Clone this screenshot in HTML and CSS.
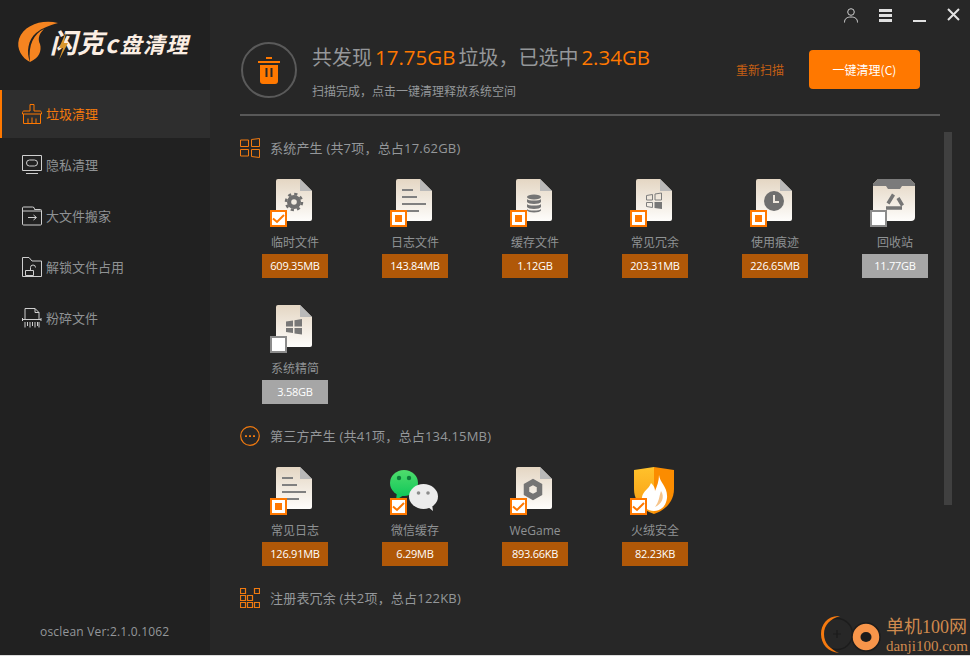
FILE: index.html
```html
<!DOCTYPE html>
<html lang="zh-CN">
<head>
<meta charset="utf-8">
<title>闪克C盘清理</title>
<link rel="stylesheet" href="styles.css">
</head>
<body>
<svg class="defs" width="0" height="0" aria-hidden="true">
  <defs>
    <linearGradient id="paper" x1="0" y1="0" x2="0" y2="1">
      <stop offset="0" stop-color="#e4d6c3"/>
      <stop offset="1" stop-color="#fefdfb"/>
    </linearGradient>
    <linearGradient id="shieldL" x1="0" y1="0" x2="0" y2="1">
      <stop offset="0" stop-color="#ffc22c"/>
      <stop offset="1" stop-color="#f89a10"/>
    </linearGradient>
    <linearGradient id="green" x1="0" y1="0" x2="0" y2="1">
      <stop offset="0" stop-color="#4fdc6c"/>
      <stop offset="1" stop-color="#12c85a"/>
    </linearGradient>
    <symbol id="doc" viewBox="0 0 50 48">
      <path d="M8 0H30L42 12V40a2 2 0 0 1-2 2H8a2 2 0 0 1-2-2V2a2 2 0 0 1 2-2Z" fill="url(#paper)"/>
      <path d="M30 0L42 12H30Z" fill="#b9b9b9"/>
    </symbol>
  </defs>
</svg>
<div class="app">
  <aside class="side">
    <div class="logo">
      <svg class="logo-art" width="80" height="70" viewBox="0 0 80 70" aria-hidden="true">
        <path d="M58 23C42 19 24 25 19 39C16 49 22 58 30 62C26 52 28 40 36 33C42 28 50 25 58 23Z" fill="#f58420"/>
        <path d="M30 62C39 58 42 51 40 44C38 40 38 35 44 29C34 34 28 44 30 62Z" fill="#f58420"/>
        <path d="M66 32L59 48H63L59 60L68 43H64Z" fill="#d9962c"/>
      </svg>
      <span class="logo-big">闪克</span><span class="logo-c">c</span><span class="logo-small">盘清理</span>
    </div>
    <nav class="menu">
      <a class="menu-item active">
        <svg width="20" height="20" viewBox="0 0 20 20" fill="none" stroke="currentColor"><path d="M8 .5h4V7h6c1 0 1.500.8 1.500 1.800V10H.5V8.800C.5 7.800 1 7 2 7h6ZM1.500 10V19.500H18.500V10M6 19V14.500M10 19V13.500M14 19V14.500"/></svg>
        <span>垃圾清理</span>
      </a>
      <a class="menu-item">
        <svg width="20" height="20" viewBox="0 0 20 20" fill="none" stroke="currentColor"><path d="M.5 .5h19v15H.5Z"/><rect x="4.500" y="5" width="11" height="6" rx="3"/><path d="M4 18.500h12"/></svg>
        <span>隐私清理</span>
      </a>
      <a class="menu-item">
        <svg width="20" height="20" viewBox="0 0 20 20" fill="none" stroke="currentColor"><path d="M.5 5V2a1 1 0 0 1 1-1h9a2 2 0 0 1 2 2v.5h6a1 1 0 0 1 1 1V18a1 1 0 0 1-1 1H1.500a1 1 0 0 1-1-1V5H19"/><path d="M6 11.500h8M11.500 9l3 2.500-3 2.500"/></svg>
        <span>大文件搬家</span>
      </a>
      <a class="menu-item">
        <svg width="20" height="20" viewBox="0 0 20 20" fill="none" stroke="currentColor"><path d="M.5 .5H7L10 4H19.500V19.500H.5Z"/><path d="M3.500 13.500H11.500V18.500H3.500ZM8.500 13.500V10.500a2.500 2.500 0 0 1 5 0"/></svg>
        <span>解锁文件占用</span>
      </a>
      <a class="menu-item">
        <svg width="20" height="20" viewBox="0 0 20 20" fill="none" stroke="currentColor"><path d="M3 11V.5H13L17 4.500V11M13 .5V4.500H17M.5 11.500H19M.5 10v3M19 10v3M3 14V19.500M5.500 14V18M8 14V19.500M10.500 14V18M13 14V19.500M15.500 14V18M17 14V19.500"/></svg>
        <span>粉碎文件</span>
      </a>
    </nav>
    <div class="version">osclean Ver:2.1.0.1062</div>
  </aside>

  <main class="main">
    <div class="winbar">
      <svg width="14" height="15" viewBox="0 0 14 15" fill="none" stroke="#cfcfcf"><circle cx="7" cy="4" r="3.300"/><path d="M.5 14.500C.5 10.500 3 9 7 9s6.500 1.500 6.500 5.500"/></svg>
      <span class="burger"></span>
      <span class="minimize"></span>
      <svg width="13" height="13" viewBox="0 0 13 13" stroke="#e2e2e2" stroke-width="2"><path d="M1 1L12 12M12 1L1 12"/></svg>
    </div>

    <header class="head">
      <div class="ring">
        <svg width="24" height="28" viewBox="0 0 24 28" aria-hidden="true">
          <path d="M9 1h6v2h-6ZM1 5h22v2H1Z" fill="#ff7800"/>
          <path d="M3 9H21V25a3 3 0 0 1-3 3H6a3 3 0 0 1-3-3Z" fill="#ff7800"/>
          <path d="M8.500 12h2v9h-2ZM13.500 12h2v9h-2Z" fill="#272727"/>
        </svg>
      </div>
      <div class="head-text">
        <div class="title">共发现 <b>17.75GB</b> 垃圾，已选中 <b>2.34GB</b></div>
        <div class="subtitle">扫描完成，点击一键清理释放系统空间</div>
      </div>
      <a class="rescan">重新扫描</a>
      <button class="clean">一键清理(C)</button>
    </header>

    <section class="group">
      <h2 class="group-head">
        <svg width="20" height="20" viewBox="0 0 20 20" fill="none" stroke="#f07a10"><path d="M.5 2H8.500V8.500H.5ZM11.500 1.500L19.500 .5V8.500H11.500ZM.5 11.500H8.500V18H.5ZM11.500 11.500H19.500V19.500L11.500 18.500Z"/></svg>
        <span>系统产生 (共7项，总占17.62GB)</span>
      </h2>
      <div class="tiles">
        <div class="tile">
          <div class="art">
            <svg width="50" height="48" viewBox="0 0 50 48"><use href="#doc"/><circle cx="24" cy="23" r="7" fill="#6f6f6f"/><circle cx="24" cy="23" r="8" fill="none" stroke="#6f6f6f" stroke-width="2.500" stroke-dasharray="3.200 3.080"/><circle cx="24" cy="23" r="2.800" fill="#f1ebe2"/></svg>
            <i class="check on"><svg width="13" height="13" viewBox="0 0 13 13" fill="none" stroke="#ff7800" stroke-width="2"><path d="M1 6.500L5 10L12 3"/></svg></i>
          </div>
          <div class="name">临时文件</div>
          <div class="size">609.35MB</div>
        </div>
        <div class="tile">
          <div class="art">
            <svg width="50" height="48" viewBox="0 0 50 48"><use href="#doc"/><path d="M12 11h11M12 18h15M12 25h24M12 32h17" stroke="#808080" stroke-width="2"/></svg>
            <i class="check part"></i>
          </div>
          <div class="name">日志文件</div>
          <div class="size">143.84MB</div>
        </div>
        <div class="tile">
          <div class="art">
            <svg width="50" height="48" viewBox="0 0 50 48"><use href="#doc"/><g fill="#757575"><ellipse cx="24" cy="18" rx="7" ry="2.500"/><path d="M17 20c1 2 13 2 14 0v3c-1 2.500-13 2.500-14 0ZM17 25c1 2 13 2 14 0v3c-1 2.500-13 2.500-14 0ZM17 30c1 2 13 2 14 0v1.500c-1 2.500-13 2.500-14 0Z"/></g></svg>
            <i class="check part"></i>
          </div>
          <div class="name">缓存文件</div>
          <div class="size">1.12GB</div>
        </div>
        <div class="tile">
          <div class="art">
            <svg width="50" height="48" viewBox="0 0 50 48"><use href="#doc"/><path d="M16.500 16.500L22.500 15.500V21H16.500ZM25 15L31.500 14V21H25ZM16.500 23.500H22.500V28.500L16.500 27.500Z" fill="none" stroke="#7d7d7d"/><path d="M24.500 23H32V30L24.500 29Z" fill="#777"/></svg>
            <i class="check part"></i>
          </div>
          <div class="name">常见冗余</div>
          <div class="size">203.31MB</div>
        </div>
        <div class="tile">
          <div class="art">
            <svg width="50" height="48" viewBox="0 0 50 48"><use href="#doc"/><circle cx="24" cy="22" r="10" fill="#6f6f6f"/><path d="M24 16v7h5" fill="none" stroke="#efe8de" stroke-width="2"/></svg>
            <i class="check part"></i>
          </div>
          <div class="name">使用痕迹</div>
          <div class="size">226.65MB</div>
        </div>
        <div class="tile">
          <div class="art">
            <svg width="50" height="48" viewBox="0 0 50 48"><path d="M8 0H40L45 5V38a4 4 0 0 1-4 4H7a4 4 0 0 1-4-4V5Z" fill="url(#paper)"/><path d="M8 0H40L45 5V7H32L30 10H18L16 7H3V5Z" fill="#7b7b7b"/><path d="M23.500 15.500L18 24.500M28 19L32.500 26.500M16 29H32" fill="none" stroke="#767676" stroke-width="3.500"/></svg>
            <i class="check"></i>
          </div>
          <div class="name">回收站</div>
          <div class="size off">11.77GB</div>
        </div>
        <div class="tile">
          <div class="art">
            <svg width="50" height="48" viewBox="0 0 50 48"><use href="#doc"/><path d="M16 16.500L23 15.500V21.500H16ZM24.500 15.300L32 14V21.500H24.500ZM16 23H23V28L16 27ZM24.500 23H32V29.500L24.500 28.500Z" fill="#777"/></svg>
            <i class="check"></i>
          </div>
          <div class="name">系统精简</div>
          <div class="size off">3.58GB</div>
        </div>
      </div>
    </section>

    <section class="group">
      <h2 class="group-head">
        <svg width="20" height="20" viewBox="0 0 20 20"><circle cx="10" cy="10" r="9.300" fill="none" stroke="#f07a10" stroke-width="1.200"/><path d="M5 9.200h2v1.800H5ZM9 9.200h2v1.800H9ZM13 9.200h2v1.800h-2Z" fill="#f07a10"/></svg>
        <span>第三方产生 (共41项，总占134.15MB)</span>
      </h2>
      <div class="tiles">
        <div class="tile">
          <div class="art">
            <svg width="50" height="48" viewBox="0 0 50 48"><use href="#doc"/><path d="M12 11h11M12 18h15M12 25h24M12 32h17" stroke="#808080" stroke-width="2"/></svg>
            <i class="check part"></i>
          </div>
          <div class="name">常见日志</div>
          <div class="size">126.91MB</div>
        </div>
        <div class="tile">
          <div class="art">
            <svg width="50" height="48" viewBox="0 0 50 48"><ellipse cx="14" cy="16" rx="14" ry="13" fill="url(#green)"/><path d="M7 25l-1 8 8-5Z" fill="#14c95c"/><circle cx="9" cy="11" r="2.200" fill="#0e7d3a"/><circle cx="19" cy="11" r="2.200" fill="#0e7d3a"/><ellipse cx="33.500" cy="29.500" rx="14.500" ry="12.500" fill="#ececec"/><path d="M38 40l5 4-1-7Z" fill="#ececec"/><circle cx="28.500" cy="26" r="1.800" fill="#8c8c8c"/><circle cx="38" cy="26" r="1.800" fill="#8c8c8c"/></svg>
            <i class="check on"><svg width="13" height="13" viewBox="0 0 13 13" fill="none" stroke="#ff7800" stroke-width="2"><path d="M1 6.500L5 10L12 3"/></svg></i>
          </div>
          <div class="name">微信缓存</div>
          <div class="size">6.29MB</div>
        </div>
        <div class="tile">
          <div class="art">
            <svg width="50" height="48" viewBox="0 0 50 48"><use href="#doc"/><path d="M23 15L29.500 18.700V26.300L23 30L16.500 26.300V18.700Z" fill="none" stroke="#757575" stroke-width="5.500"/></svg>
            <i class="check on"><svg width="13" height="13" viewBox="0 0 13 13" fill="none" stroke="#ff7800" stroke-width="2"><path d="M1 6.500L5 10L12 3"/></svg></i>
          </div>
          <div class="name">WeGame</div>
          <div class="size">893.66KB</div>
        </div>
        <div class="tile">
          <div class="art art-tall">
            <svg width="50" height="48" viewBox="0 0 50 48"><path d="M4 3L24 0V47C12 43 4 34 4 22Z" fill="url(#shieldL)"/><path d="M24 0L44 3V22C44 34 36 43 24 47Z" fill="#fb8c00"/><path d="M29 8C30 16 38 20 37 31C36 40 30 44 24 44C16 44 11 38 12 30C13 24 19 22 21 16C24 19 25 21 25 24C27 19 29 14 29 8Z" fill="#fff"/><path d="M31 24C35 30 32 37 25 40C29 35 29 30 31 24Z" fill="#f6c48a"/></svg>
            <i class="check on"><svg width="13" height="13" viewBox="0 0 13 13" fill="none" stroke="#ff7800" stroke-width="2"><path d="M1 6.500L5 10L12 3"/></svg></i>
          </div>
          <div class="name">火绒安全</div>
          <div class="size">82.23KB</div>
        </div>
      </div>
    </section>

    <section class="group">
      <h2 class="group-head">
        <svg width="20" height="20" viewBox="0 0 20 20" fill="none" stroke="#f07a10" stroke-width="1.200"><path d="M.5 .5h5v5h-5ZM14.500 .5h5v5h-5ZM.5 7.500h5v5h-5ZM7.500 7.500h5v5h-5ZM.5 14.500h5v5h-5ZM7.500 14.500h5v5h-5ZM14.500 14.500h5v5h-5Z"/></svg>
        <span>注册表冗余 (共2项，总占122KB)</span>
      </h2>
    </section>

    <div class="scroll-thumb"></div>

    <div class="watermark">
      <svg class="wm-art" width="64" height="41" viewBox="0 0 64 41" aria-hidden="true">
        <circle cx="18" cy="20" r="15.500" fill="none" stroke="#1c1c1c" stroke-width="1.500"/>
        <path d="M21 2C9 1 2 10 2 20c0 10 7 18 18 19C11 35 5 29 5 20C5 11 11 5 21 2Z" fill="#f57a10"/>
        <path d="M14 20h8M18 16v8" stroke="#1c1c1c" stroke-width="1.200"/>
        <circle cx="47" cy="23" r="14" fill="#f7954a" stroke="#1c1c1c" stroke-width="1.500"/>
        <ellipse cx="47" cy="23" rx="5.500" ry="5" fill="#1c1c1c"/>
      </svg>
      <div class="wm-text">
        <div class="wm-cn">单机100网</div>
        <div class="wm-en">danji100.com</div>
      </div>
    </div>
  </main>
</div>
</body>
</html>
```

FILE: styles.css
```css
* { box-sizing: border-box; }
html, body { margin: 0; padding: 0; }
body {
  width: 970px;
  height: 656px;
  overflow: hidden;
  background: #dcdcdc;
  font-family: "Noto Sans CJK SC", "Noto Sans", sans-serif;
}
.defs { position: absolute; }
.app { display: flex; width: 970px; height: 655px; overflow: hidden; }

/* sidebar */
.side {
  width: 210px;
  background: #212121;
  display: flex;
  flex-direction: column;
  flex: none;
}
.logo {
  position: relative;
  height: 90px;
  padding: 26px 0 0 50px;
  display: flex;
  align-items: baseline;
  color: #fbeee3;
  font-weight: 700;
  font-style: italic;
  line-height: 32px;
}
.logo-art { position: absolute; left: 0; top: 0; }
.logo-big { font-size: 27px; letter-spacing: 0; }
.logo-c { font-size: 24px; margin: 0 2px 0 1px; }
.logo-small { font-size: 22px; letter-spacing: 1px; }
.menu { display: flex; flex-direction: column; gap: 3px; }
.menu-item {
  height: 48px;
  display: flex;
  align-items: center;
  gap: 4px;
  padding-left: 22px;
  font-size: 13px;
  color: #8f9294;
}
.menu-item span { padding-bottom: 2px; }
.menu-item svg { color: #cfcfcf; flex: none; }
.menu-item.active {
  background: #2e2e2e;
  box-shadow: inset 2px 0 0 #ff7800;
  color: #f57a0c;
}
.menu-item.active svg { color: #ff7800; }
.version {
  margin-top: auto;
  padding: 0 0 14px 40px;
  font-size: 12px;
  line-height: 18px;
  letter-spacing: .2px;
  color: #94979a;
  font-family: "Open Sans", "Noto Sans CJK SC", sans-serif;
}

/* main */
.main {
  position: relative;
  flex: 1;
  min-width: 0;
  background: #272727;
  padding-left: 30px;
  overflow: hidden;
}
.winbar {
  height: 30px;
  margin-right: 10px;
  padding-top: 8px;
  display: flex;
  align-items: flex-start;
  justify-content: flex-end;
  gap: 21px;
}
.burger {
  width: 13px;
  height: 13px;
  margin-top: 1px;
  border-top: 3px solid #e0e0e0;
  border-bottom: 3px solid #e0e0e0;
  position: relative;
}
.burger::before {
  content: "";
  position: absolute;
  left: 0;
  right: 0;
  top: 2px;
  height: 3px;
  background: #e0e0e0;
}
.minimize {
  width: 13px;
  height: 2px;
  margin-top: 12px;
  background: #e2e2e2;
}
.head {
  width: 700px;
  height: 74px;
  margin-top: 12px;
  border-bottom: 2px solid #585858;
  display: flex;
  align-items: flex-start;
}
.ring {
  width: 56px;
  height: 56px;
  margin-left: 1px;
  border: 2px solid #5a5a5a;
  border-radius: 50%;
  display: flex;
  align-items: center;
  justify-content: center;
  flex: none;
}
.head-text { margin-left: 15px; flex: none; }
.title {
  font-size: 20px;
  line-height: 30px;
  word-spacing: -1.500px;
  color: #95979a;
}
.title b { font-weight: 400; color: #ff7800; font-size: 20.5px; font-family: "Open Sans", sans-serif; }
.subtitle {
  margin-top: 9px;
  font-size: 12px;
  line-height: 20px;
  color: #94979a;
}
.rescan {
  margin-left: auto;
  margin-top: 19px;
  font-size: 12px;
  line-height: 18px;
  color: #c45f14;
}
.clean {
  width: 111px;
  height: 39px;
  margin: 8px 20px 0 25px;
  border: 0;
  border-radius: 4px;
  background: #ff7800;
  color: #fff;
  font: 400 12px "Noto Sans CJK SC", sans-serif;
}
.group { margin-top: 22px; }
.group-head {
  display: flex;
  align-items: center;
  gap: 10px;
  height: 20px;
  margin: 0 0 21px;
  font-size: 13px;
  font-weight: 400;
  letter-spacing: .2px;
  color: #94979a;
  font-family: "Open Sans", "Noto Sans CJK SC", sans-serif;
}
.group-head span { padding-bottom: 2px; }
.group-head svg { flex: none; }
.tiles {
  display: grid;
  grid-template-columns: repeat(6, 120px);
  grid-auto-rows: 99px;
  row-gap: 27px;
  margin-left: -5px;
}
.tile {
  display: flex;
  flex-direction: column;
  align-items: center;
}
.art { position: relative; width: 50px; height: 48px; flex: none; }
.art svg { display: block; }
.art-tall > svg { overflow: visible; }
.check {
  position: absolute;
  left: 0;
  top: 31px;
  width: 17px;
  height: 17px;
  background: #fff;
  border: 2px solid #8c8c8c;
  display: flex;
  align-items: center;
  justify-content: center;
}
.check.on, .check.part { border-color: #ff7800; }
.check.part::before { content: ""; width: 7px; height: 7px; background: #ff7800; }
.name {
  margin-top: 7px;
  font-size: 12px;
  line-height: 18px;
  color: #8f9294;
  white-space: nowrap;
  font-family: "Open Sans", "Noto Sans CJK SC", sans-serif;
}
.size {
  width: 66px;
  height: 24px;
  margin-top: 2px;
  background: #b05808;
  color: #fff;
  font-size: 11px;
  letter-spacing: -.25px;
  line-height: 24px;
  text-align: center;
  font-family: "Open Sans", sans-serif;
}
.size.off { background: #a6a6a6; }

/* overlays */
.scroll-thumb {
  position: absolute;
  left: 734px;
  top: 132px;
  width: 8px;
  height: 373px;
  background: #404040;
}
.watermark {
  position: absolute;
  right: 0;
  bottom: 0;
  display: flex;
  align-items: flex-end;
}
.wm-art { display: block; margin-right: 3px; }
.wm-text { color: #cf8a4e; padding-right: 2px; }
.wm-cn {
  font-size: 18px;
  line-height: 20px;
  font-family: "Liberation Serif", "Noto Sans CJK SC", serif;
}
.wm-en {
  font-size: 15px;
  line-height: 18px;
  font-family: "Liberation Serif", serif;
}
```
